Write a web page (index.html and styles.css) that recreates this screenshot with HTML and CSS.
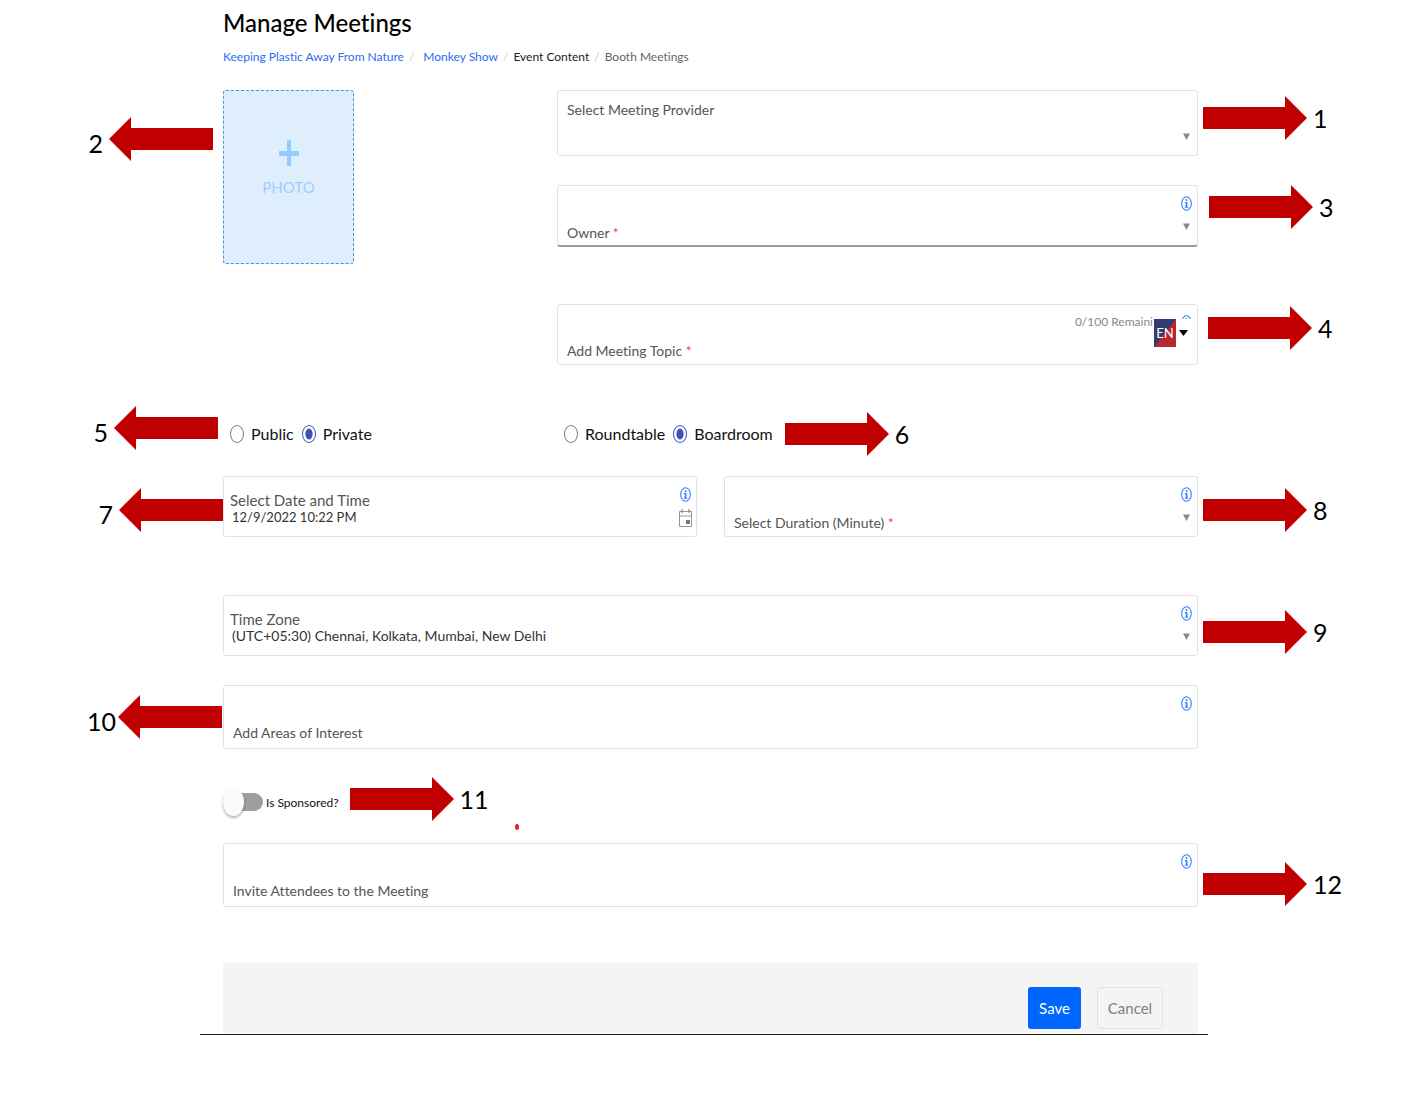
FILE: index.html
```html
<!DOCTYPE html>
<html lang="en">
<head>
  <meta charset="UTF-8">
  <meta name="viewport" content="width=device-width, initial-scale=1.0">
  <title>Manage Meetings</title>
  <link rel="stylesheet" href="styles.css">
</head>
<body>
  <!-- shared shapes -->
  <svg class="sprite" aria-hidden="true">
    <symbol id="info" viewBox="0 0 11 15">
      <ellipse cx="5.5" cy="7.5" rx="4.8" ry="6.7" fill="none" stroke="#2f80ff" stroke-width="1.1"/>
      <path d="M4.7 3.2h1.7v1.8H4.7zM3.9 6.1h2.5v4.6h.9v1H3.8v-1h.9V7.1h-.8z" fill="#2f80ff"/>
    </symbol>
    <symbol id="caret" viewBox="0 0 7 7">
      <path d="M0 .5h7L3.5 7z" fill="#8a8a8a"/>
    </symbol>
    <symbol id="arrow" viewBox="0 0 104 44">
      <path d="M0 11h82V0l22 22-22 22V33H0z" fill="#c00000"/>
    </symbol>
  </svg>

  <main class="page">
    <h1>Manage Meetings</h1>
    <nav class="breadcrumb" aria-label="Breadcrumb">
      <a href="#">Keeping Plastic Away From Nature</a>
      <span class="slash wide">/</span>
      <a href="#">Monkey Show</a>
      <span class="slash">/</span>
      <a href="#" class="dark">Event Content</a>
      <span class="slash">/</span>
      <span class="current">Booth Meetings</span>
    </nav>

    <form>
      <div class="split">
        <div class="photo-col">
          <button type="button" class="photo">
            <svg width="20" height="26" viewBox="0 0 20 26" aria-hidden="true"><path d="M8 0h4v11h8v5h-8v10H8V16H0v-5h8z" fill="#93ccff"/></svg>
            <span>PHOTO</span>
          </button>
          <div class="callout left c2"><svg class="arrow"><use href="#arrow"/></svg><span>2</span></div>
        </div>

        <div class="stack">
          <div class="field tall">
            <div class="body">
              <label for="provider">Select Meeting Provider</label>
              <select id="provider"><option></option></select>
            </div>
            <div class="tools"><svg class="caret"><use href="#caret"/></svg></div>
            <div class="callout right c1"><svg class="arrow"><use href="#arrow"/></svg><span>1</span></div>
          </div>

          <div class="field empty focused">
            <div class="body">
              <label for="owner">Owner <b>*</b></label>
              <select id="owner"><option></option></select>
            </div>
            <div class="tools">
              <button type="button" class="info" aria-label="Owner help"><svg><use href="#info"/></svg></button>
              <svg class="caret"><use href="#caret"/></svg>
            </div>
            <div class="callout right c3"><svg class="arrow"><use href="#arrow"/></svg><span>3</span></div>
          </div>

          <div class="field empty topic">
            <div class="body">
              <label for="topic">Add Meeting Topic <b>*</b></label>
              <input type="text" id="topic">
            </div>
            <span class="count">0/100 Remaini</span>
            <div class="tools">
              <button type="button" class="info" aria-label="Topic help"><svg><use href="#info"/></svg></button>
            </div>
            <button type="button" class="lang">
              <span class="flag">EN</span>
              <svg width="9" height="6" viewBox="0 0 9 6" aria-hidden="true"><path d="M0 0h9L4.500 6z" fill="#000"/></svg>
            </button>
            <div class="callout right c4"><svg class="arrow"><use href="#arrow"/></svg><span>4</span></div>
          </div>
        </div>
      </div>

      <div class="split radios">
        <div class="radio-group">
          <label><input type="radio" name="access">Public</label>
          <label><input type="radio" name="access" checked>Private</label>
          <div class="callout left c5"><svg class="arrow"><use href="#arrow"/></svg><span>5</span></div>
        </div>
        <div class="radio-group">
          <label><input type="radio" name="room">Roundtable</label>
          <label><input type="radio" name="room" checked>Boardroom</label>
          <div class="note"><svg class="arrow"><use href="#arrow"/></svg><span>6</span></div>
        </div>
      </div>

      <div class="halves">
        <div class="field filled">
          <div class="body">
            <label for="date">Select Date and Time</label>
            <input type="text" id="date" value="12/9/2022 10:22 PM">
          </div>
          <div class="tools">
            <button type="button" class="info" aria-label="Date help"><svg><use href="#info"/></svg></button>
            <button type="button" class="calendar" aria-label="Open calendar">
              <svg width="13" height="18" viewBox="0 0 13 18" aria-hidden="true">
                <path d="M.5 2.500h12v15H.5zM.5 7h12" fill="none" stroke="#959595"/>
                <path d="M2.500 0h1v4h-1zM9.500 0h1v4h-1zM7 11h4v4H7z" fill="#777"/>
              </svg>
            </button>
          </div>
          <div class="callout left c7"><svg class="arrow"><use href="#arrow"/></svg><span>7</span></div>
        </div>

        <div class="field empty">
          <div class="body">
            <label for="duration">Select Duration (Minute) <b>*</b></label>
            <select id="duration"><option></option></select>
          </div>
          <div class="tools">
            <button type="button" class="info" aria-label="Duration help"><svg><use href="#info"/></svg></button>
            <svg class="caret"><use href="#caret"/></svg>
          </div>
          <div class="callout right c8"><svg class="arrow"><use href="#arrow"/></svg><span>8</span></div>
        </div>
      </div>

      <div class="field filled zone">
        <div class="body">
          <label for="zone">Time Zone</label>
          <select id="zone"><option>(UTC+05:30) Chennai, Kolkata, Mumbai, New Delhi</option></select>
        </div>
        <div class="tools">
          <button type="button" class="info" aria-label="Time zone help"><svg><use href="#info"/></svg></button>
          <svg class="caret"><use href="#caret"/></svg>
        </div>
        <div class="callout right c9"><svg class="arrow"><use href="#arrow"/></svg><span>9</span></div>
      </div>

      <div class="field empty roomy">
        <div class="body">
          <label for="areas">Add Areas of Interest</label>
          <input type="text" id="areas">
        </div>
        <div class="tools">
          <button type="button" class="info" aria-label="Areas help"><svg><use href="#info"/></svg></button>
        </div>
        <div class="callout left c10"><svg class="arrow"><use href="#arrow"/></svg><span>10</span></div>
      </div>

      <div class="sponsor">
        <label><input type="checkbox" role="switch">Is Sponsored?</label>
        <div class="note"><svg class="arrow"><use href="#arrow"/></svg><span>11</span></div>
        <i class="dot"></i>
      </div>

      <div class="field empty roomy">
        <div class="body">
          <label for="invite">Invite Attendees to the Meeting</label>
          <input type="text" id="invite">
        </div>
        <div class="tools">
          <button type="button" class="info" aria-label="Invite help"><svg><use href="#info"/></svg></button>
        </div>
        <div class="callout right c12"><svg class="arrow"><use href="#arrow"/></svg><span>12</span></div>
      </div>

      <div class="footer">
        <div class="actions">
          <button type="submit" class="btn save">Save</button>
          <button type="button" class="btn cancel">Cancel</button>
        </div>
      </div>
    </form>
  </main>
</body>
</html>
```

FILE: styles.css
```css
* {
  box-sizing: border-box;
}

body {
  margin: 0;
  background: #fff;
  color: #111;
  font-family: Lato, "Liberation Sans", sans-serif;
  font-size: 14px;
  font-variant-ligatures: none;
}

button,
input,
select {
  font: inherit;
  color: inherit;
  margin: 0;
  padding: 0;
  border: 0;
  background: none;
  outline: none;
}

button {
  cursor: pointer;
}

svg {
  display: block;
  flex: none;
}

.sprite {
  position: absolute;
  width: 0;
  height: 0;
}

.page {
  padding: 4px 204px 64px 223px;
}

h1 {
  margin: 0;
  font-size: 24px;
  line-height: 38px;
  font-weight: 500;
  color: #000;
}

/* breadcrumb */
.breadcrumb {
  display: flex;
  align-items: center;
  gap: 5px;
  height: 28px;
  font-size: 12px;
  white-space: nowrap;
}

.breadcrumb a {
  color: #2b6cf0;
  text-decoration: none;
}

.breadcrumb .dark {
  color: #222;
}

.slash {
  color: #ccc;
}

.slash.wide {
  margin-right: 4px;
}

.current {
  color: #666;
}

form {
  padding-top: 20px;
}

.split {
  display: grid;
  grid-template-columns: 334fr 641fr;
}

.photo-col {
  position: relative;
}

.photo {
  display: flex;
  flex-direction: column;
  align-items: center;
  gap: 11px;
  width: 131px;
  height: 174px;
  padding-top: 49px;
  border: 1px dashed #3f97e6;
  border-radius: 3px;
  background: #dfeefc;
  color: #a0cdff;
  font-size: 15px;
  line-height: 20px;
}

/* fields */
.field {
  position: relative;
  display: flex;
  min-height: 61px;
  border: 1px solid #e2e2e2;
  border-radius: 3px;
  color: #555;
}

.field.tall {
  min-height: 66px;
  margin-bottom: 29px;
}

.field.roomy {
  min-height: 64px;
}

.field.focused {
  min-height: 62px;
  margin-bottom: 57px;
  border-bottom: 2px solid #999;
}

.body {
  flex: 1;
  display: flex;
  flex-direction: column;
  padding: 9px 0 3px 9px;
}

.body label {
  line-height: 20px;
}

.body b {
  color: #f44;
  font-weight: 400;
}

.body input,
.body select {
  flex: 1;
  min-height: 0;
  appearance: none;
}

/* an empty field keeps its label on the bottom line */
.empty .body {
  flex-direction: column-reverse;
}

.focused .body {
  padding-bottom: 2px;
}

.roomy .body {
  padding-bottom: 5px;
}

.filled .body {
  padding: 15px 0 0 6px;
}

.filled label {
  font-size: 15px;
  line-height: 16px;
}

.filled input,
.filled select {
  flex: none;
  height: 17px;
  padding-left: 2px;
  color: #333;
}

.filled input {
  font-size: 13px;
}

.tools {
  display: flex;
  flex-direction: column;
  align-items: center;
  gap: 12px;
  width: 21px;
  padding-top: 10px;
}

.info svg {
  width: 11px;
  height: 15px;
}

.caret {
  width: 7px;
  height: 7px;
}

.tall .caret {
  margin-top: 32px;
}

.calendar {
  margin-top: -5px;
}

.count {
  margin-right: 23px;
  padding-top: 8px;
  line-height: 18px;
  font-size: 12px;
  color: #888;
}

.lang {
  position: absolute;
  top: 14px;
  right: 1px;
  display: flex;
  align-items: center;
  gap: 3px;
  width: 42px;
  background: #fff;
}

.flag {
  width: 22px;
  line-height: 28px;
  background: linear-gradient(127deg, #353a70 50%, #b5292f 50%);
  color: #fff;
  font-size: 13px;
  text-align: center;
}

/* radios */
.radios {
  height: 111px;
  padding-top: 26px;
  align-items: center;
}

.radio-group {
  position: relative;
  display: flex;
  align-items: center;
  gap: 8px;
  padding-left: 7px;
  font-size: 16px;
}

.radio-group label {
  display: flex;
  align-items: center;
  gap: 7px;
}

.radio-group input {
  appearance: none;
  width: 14px;
  height: 18px;
  border: 1px solid #777;
  border-radius: 50%;
}

.radio-group input:checked {
  border-color: #3f51b5;
  background: radial-gradient(4px 6px, #3f51b5 80%, #fff 100%);
}

.halves {
  display: grid;
  grid-template-columns: 1fr 1fr;
  gap: 27px;
}

.zone {
  margin: 58px 0 29px;
}

/* sponsored switch */
.sponsor {
  position: relative;
  display: flex;
  align-items: center;
  gap: 11px;
  height: 94px;
}

.sponsor label {
  display: flex;
  align-items: center;
  gap: 3px;
  padding-top: 12px;
  font-size: 12px;
}

.sponsor input {
  appearance: none;
  position: relative;
  width: 40px;
  height: 18px;
  border-radius: 9px;
  background: #9e9e9e;
}

.sponsor input::before {
  content: '';
  position: absolute;
  top: -5px;
  left: 0;
  width: 21px;
  height: 28px;
  border-radius: 50%;
  background: #fafafa;
  box-shadow: 0 2px 3px rgba(0, 0, 0, 0.3);
}

.dot {
  position: absolute;
  left: 292px;
  top: 75px;
  width: 4px;
  height: 6px;
  border-radius: 50%;
  background: #e8202a;
}

/* numbered arrows */
.callout,
.note {
  display: flex;
  align-items: center;
  gap: 6px;
  color: #000;
  font-size: 25px;
  line-height: 44px;
}

.arrow {
  width: 104px;
  height: 44px;
}

.sponsor .note {
  padding-top: 6px;
}

.radio-group .note {
  margin-left: 4px;
}

.callout {
  position: absolute;
}

.left {
  right: 100%;
  flex-direction: row-reverse;
}

.left .arrow {
  transform: scaleX(-1);
}

.left span {
  padding-top: 8px;
}

.right {
  left: calc(100% + 6px);
}

.c1 { top: 5px; }
.c2 { top: 23px; margin-right: 10px; }
.c3 { top: -1px; left: calc(100% + 12px); }
.c4 { top: 1px; left: calc(100% + 11px); }
.c5 { top: -22px; margin-right: 5px; }
.c7 { top: 7px; margin-right: 1px; }
.c8 { top: 11px; }
.c9 { top: 14px; }
.c10 { top: 5px; margin-right: 2px; gap: 2px; }
.c12 { top: 18px; }

.c5 .arrow,
.c7 .arrow {
  margin-top: 0;
}

/* the closing rule runs past both edges of the form */
.footer {
  margin: 56px -10px 0 -23px;
  padding: 0 10px 0 23px;
  border-bottom: 1px solid #222;
}

.actions {
  display: flex;
  justify-content: flex-end;
  gap: 16px;
  height: 71px;
  padding: 24px 35px 0 0;
  background: #f4f4f4;
}

.btn {
  height: 42px;
  border-radius: 3px;
  font-size: 15px;
}

.save {
  width: 53px;
  background: #06f;
  color: #fff;
}

.cancel {
  width: 66px;
  border: 1px solid #e2e2e2;
  color: #808080;
}
```
